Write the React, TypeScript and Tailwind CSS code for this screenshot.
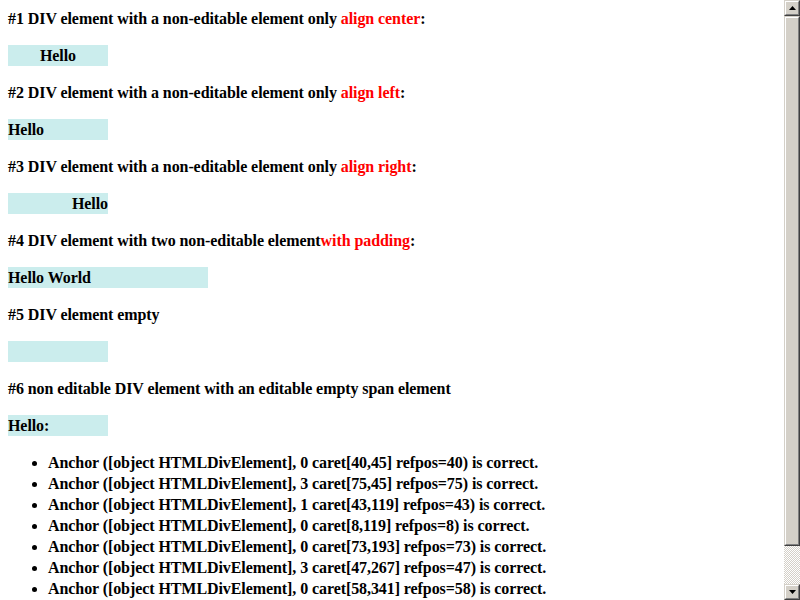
import React from 'react';

const results = [
  '0 caret[40,45] refpos=40',
  '3 caret[75,45] refpos=75',
  '1 caret[43,119] refpos=43',
  '0 caret[8,119] refpos=8',
  '0 caret[73,193] refpos=73',
  '3 caret[47,267] refpos=47',
  '0 caret[58,341] refpos=58',
];

function Heading({ children }: { children: React.ReactNode }) {
  return <p className="h-[21px] leading-[21px] mb-4">{children}</p>;
}

function Box({ children, className = '' }: { children?: React.ReactNode; className?: string }) {
  return <div className={`h-[21px] leading-[21px] bg-[#cbeded] mb-4 ${className}`}>{children}</div>;
}

function ArrowButton({ down }: { down?: boolean }) {
  return (
    <div className="h-4 w-4 bg-[#d4d0c8] border border-t-[#d4d0c8] border-l-[#d4d0c8] border-r-[#404040] border-b-[#404040]">
      <div className="h-full w-full flex items-center justify-center border border-t-white border-l-white border-r-[#808080] border-b-[#808080]">
        <svg width="7" height="4" viewBox="0 0 7 4">
          {down ? <path d="M0 0h7L3.5 4z" fill="#000" /> : <path d="M3.5 0L7 4H0z" fill="#000" />}
        </svg>
      </div>
    </div>
  );
}

function Scrollbar() {
  return (
    <div className="w-4 h-full flex flex-col shrink-0">
      <ArrowButton />
      <div className="h-[530px] bg-[#d4d0c8] border border-t-[#d4d0c8] border-l-[#d4d0c8] border-r-[#404040] border-b-[#404040]">
        <div className="h-full border border-t-white border-l-white border-r-[#808080] border-b-[#808080]" />
      </div>
      <div className="flex-1 bg-[repeating-conic-gradient(#d4d0c8_0_25%,#ffffff_0_50%)] bg-[length:2px_2px]" />
      <ArrowButton down />
    </div>
  );
}

export default function App() {
  return (
    <div className="flex h-[600px] w-[800px] overflow-hidden bg-white">
      <div className="flex-1 overflow-hidden px-2 pt-2 font-['Liberation_Serif',serif] font-bold text-[16px] tracking-[-0.08px] text-black">
        <Heading>
          #1 DIV element with a non-editable element only <span className="text-[#ff0000]">align center</span>:
        </Heading>
        <Box className="w-[100px] text-center">Hello</Box>

        <Heading>
          #2 DIV element with a non-editable element only <span className="text-[#ff0000]">align left</span>:
        </Heading>
        <Box className="w-[100px] text-left">Hello</Box>

        <Heading>
          #3 DIV element with a non-editable element only <span className="text-[#ff0000]">align right</span>:
        </Heading>
        <Box className="w-[100px] text-right">Hello</Box>

        <Heading>
          #4 DIV element with two non-editable element<span className="text-[#ff0000]">with padding</span>:
        </Heading>
        <Box className="w-[200px]">
          <span>Hello</span> <span>World</span>
        </Box>

        <Heading>#5 DIV element empty</Heading>
        <Box className="w-[100px]" />

        <Heading>#6 non editable DIV element with an editable empty span element</Heading>
        <Box className="w-[100px]">
          Hello:<span></span>
        </Box>

        <ul className="list-disc pl-10">
          {results.map((r) => (
            <li key={r} className="h-[21px] leading-[21px]">
              Anchor ([object HTMLDivElement], {r}) is correct.
            </li>
          ))}
        </ul>
      </div>
      <Scrollbar />
    </div>
  );
}
